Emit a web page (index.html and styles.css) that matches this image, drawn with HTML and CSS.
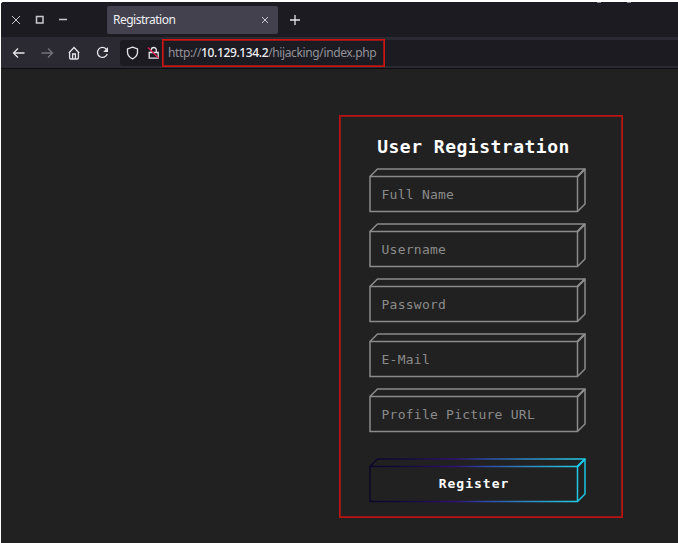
FILE: index.html
```
<!DOCTYPE html>
<html lang="en">
<head>
<meta charset="utf-8">
<title>Registration</title>
<link rel="stylesheet" href="styles.css">
</head>
<body>
<div class="browser">
  <header class="tabs">
    <svg class="window-controls" width="72" height="20" viewBox="0 0 72 20"><path d="M6 6l8 8M14 6l-8 8"/><rect class="maximize" x="30.5" y="6.5" width="6.500" height="6.500"/><path class="minimize" d="M53 9.5h8"/></svg>
    <div class="tab"><span>Registration</span><svg width="8" height="8" viewBox="0 0 8 8"><path d="M1 1l6 6M7 1L1 7"/></svg></div>
    <svg class="new-tab" width="12" height="12" viewBox="0 0 12 12"><path d="M6 1v10M1 6h10"/></svg>
    <div class="title-remnant"><i></i><i></i></div>
  </header>
  <nav class="toolbar">
    <div class="nav-icons">
      <svg width="14" height="14" viewBox="0 0 14 14"><path d="M12.5 7h-11M6 2.5L1.5 7 6 11.500"/></svg>
      <svg class="dim" width="14" height="14" viewBox="0 0 14 14"><path d="M1.500 7h11M8 2.500L12.500 7 8 11.500"/></svg>
      <svg width="14" height="14" viewBox="0 0 14 14"><path d="M.8 7L6 1.500 11.200 7M1.600 6.200v5.500q0 1.300 1.300 1.300h6.200q1.300 0 1.300-1.300V6.200M4.600 12.800V8h2.800v4.800"/></svg>
      <svg width="14" height="14" viewBox="0 0 14 14"><path d="M10.500 3.500A5 5 0 1 0 11.200 8"/><path class="solid" d="M12 1v5H7.200z"/></svg>
    </div>
    <div class="address">
      <svg width="14" height="14" viewBox="0 0 14 14"><path d="M7.500 1.200L12.500 3v3.500Q12.200 10.700 7.500 12.800 2.800 10.700 2.500 6.500V3z"/></svg>
      <svg class="lock" width="14" height="14" viewBox="0 0 14 14"><path d="M5.300 6.300V4a2.500 2.500 0 0 1 5 0v2.300M3.200 6.500h9v5.700h-9z"/><path class="slash" d="M2 1.500l10.500 10.500"/></svg>
      <div class="url">http://<b>10.129.134.2</b>/hijacking/index.php</div>
    </div>
  </nav>
  <main>
    <form class="card">
      <h1>User Registration</h1>
      <label class="field"><svg width="218" height="45" viewBox="0 0 218 45"><path d="M1 8.500H208.500V43.500H1zM1 8.500L8.500 1H216V36L208.500 43.500M208.500 8.500L216 1"/><path class="corner" d="M208.500 8.500L216 1"/></svg><span>Full Name</span></label>
      <label class="field"><svg width="218" height="45" viewBox="0 0 218 45"><path d="M1 8.500H208.500V43.500H1zM1 8.500L8.500 1H216V36L208.500 43.500M208.500 8.500L216 1"/><path class="corner" d="M208.500 8.500L216 1"/></svg><span>Username</span></label>
      <label class="field"><svg width="218" height="45" viewBox="0 0 218 45"><path d="M1 8.500H208.500V43.500H1zM1 8.500L8.500 1H216V36L208.500 43.500M208.500 8.500L216 1"/><path class="corner" d="M208.500 8.500L216 1"/></svg><span>Password</span></label>
      <label class="field"><svg width="218" height="45" viewBox="0 0 218 45"><path d="M1 8.500H208.500V43.500H1zM1 8.500L8.500 1H216V36L208.500 43.500M208.500 8.500L216 1"/><path class="corner" d="M208.500 8.500L216 1"/></svg><span>E-Mail</span></label>
      <label class="field"><svg width="218" height="45" viewBox="0 0 218 45"><path d="M1 8.500H208.500V43.500H1zM1 8.500L8.500 1H216V36L208.500 43.500M208.500 8.500L216 1"/><path class="corner" d="M208.500 8.500L216 1"/></svg><span>Profile Picture URL</span></label>
      <div class="field submit"><svg width="218" height="45" viewBox="0 0 218 45"><defs><linearGradient id="edge" gradientUnits="userSpaceOnUse" x1="0" y1="0" x2="217" y2="0"><stop offset="0" stop-color="#0d0628"/><stop offset=".2" stop-color="#160a45"/><stop offset=".4" stop-color="#301078"/><stop offset=".54" stop-color="#2b4ba6"/><stop offset=".72" stop-color="#2c86c4"/><stop offset=".95" stop-color="#25c8e2"/><stop offset="1" stop-color="#18c4e0"/></linearGradient></defs><path stroke="url(#edge)" d="M1 8.500H208.500V43.500H1zM1 8.500L8.500 1H216V36L208.500 43.500M208.500 8.500L216 1"/><path class="corner cyan" d="M208.500 8.500L216 1"/></svg><span>Register</span></div>
    </form>
  </main>
</div>
</body>
</html>
```

FILE: styles.css
```
* { box-sizing: border-box; }
body { margin: 0; padding: 2px 0 0 1px; height: 543px; overflow: hidden; background: #fff; }
svg { display: block; flex: none; fill: none; stroke: #e6e6ea; stroke-width: 1.3; }
.browser { height: 541px; background: #212121; border-top-left-radius: 3px; overflow: hidden; }
.tabs { position: relative; display: flex; align-items: center; height: 35px; background: #1c1b22; font: 12px "Noto Sans", sans-serif; }
.window-controls { margin-left: 5px; stroke: #c9c9cf; stroke-width: 1; }
.window-controls .maximize { stroke-width: 1.5; }
.window-controls .minimize { stroke-width: 1.5; }
.tab { display: flex; align-items: center; justify-content: space-between; width: 171px; height: 28px; margin-left: 29px; padding: 0 9px 0 6px; border-radius: 2px; background: #42414d; color: #f0f0f4; font-size: 12px; letter-spacing: -.5px; }
.tab svg { stroke-width: 1; stroke: #c9c9cf; }
.new-tab { margin-left: 11px; }
.title-remnant { position: absolute; top: 0; left: 596px; display: flex; gap: 26px; }
.title-remnant i { width: 4px; height: 1px; background: #85858b; }
.toolbar { display: flex; align-items: center; height: 32px; padding-left: 11px; background: #2b2a33; border-bottom: 1px solid #0e0d12; }
.nav-icons { display: flex; gap: 14px; }
.dim { stroke: #74737c; }
.solid { fill: #e6e6ea; stroke: none; }
.address { display: flex; align-items: center; flex: 1; height: 26px; margin-left: 10px; padding-left: 5px; border-radius: 3px 0 0 3px; background: #1c1b22; }
.lock { margin-left: 7px; }
.slash { stroke: #e12252; }
.url { width: 223px; height: 28px; margin-left: 2px; padding-left: 5px; border: 1px solid #cf1512; outline: 1px solid #951718; outline-offset: -2px; color: #929198; font: 12px/25px "Noto Sans", sans-serif; letter-spacing: -.37px; white-space: nowrap; }
.url b { color: #f0f0f4; font-weight: 500; }
main { display: flex; padding: 46px 0 0 338px; }
.card { width: 284px; height: 403px; padding: 20px 0 0 29px; border: 1px solid #b9120f; outline: 1px solid #951718; outline-offset: -2px; font-family: "DejaVu Sans Mono", monospace; }
h1 { width: 209px; margin: 0 0 10px; color: #fff; font-size: 18px; line-height: 22px; letter-spacing: .5px; text-align: center; white-space: nowrap; }
.field { display: grid; width: 218px; height: 45px; margin-bottom: 10px; }
.field svg, .field span { grid-area: 1 / 1; }
.field svg { stroke: #8b8b8b; stroke-width: 1.5; }
.field .corner { stroke-width: 2.2; }
.field .cyan { stroke: #18c4e8; }
.field span { padding: 9px 0 0 12.5px; color: #8b8b8b; font-size: 13px; line-height: 36px; letter-spacing: .25px; white-space: nowrap; }
.submit { margin-top: 25px; }
.field.submit span { width: 210px; padding: 8px 0 0; color: #fff; font-weight: 700; letter-spacing: 1px; text-align: center; }
```
